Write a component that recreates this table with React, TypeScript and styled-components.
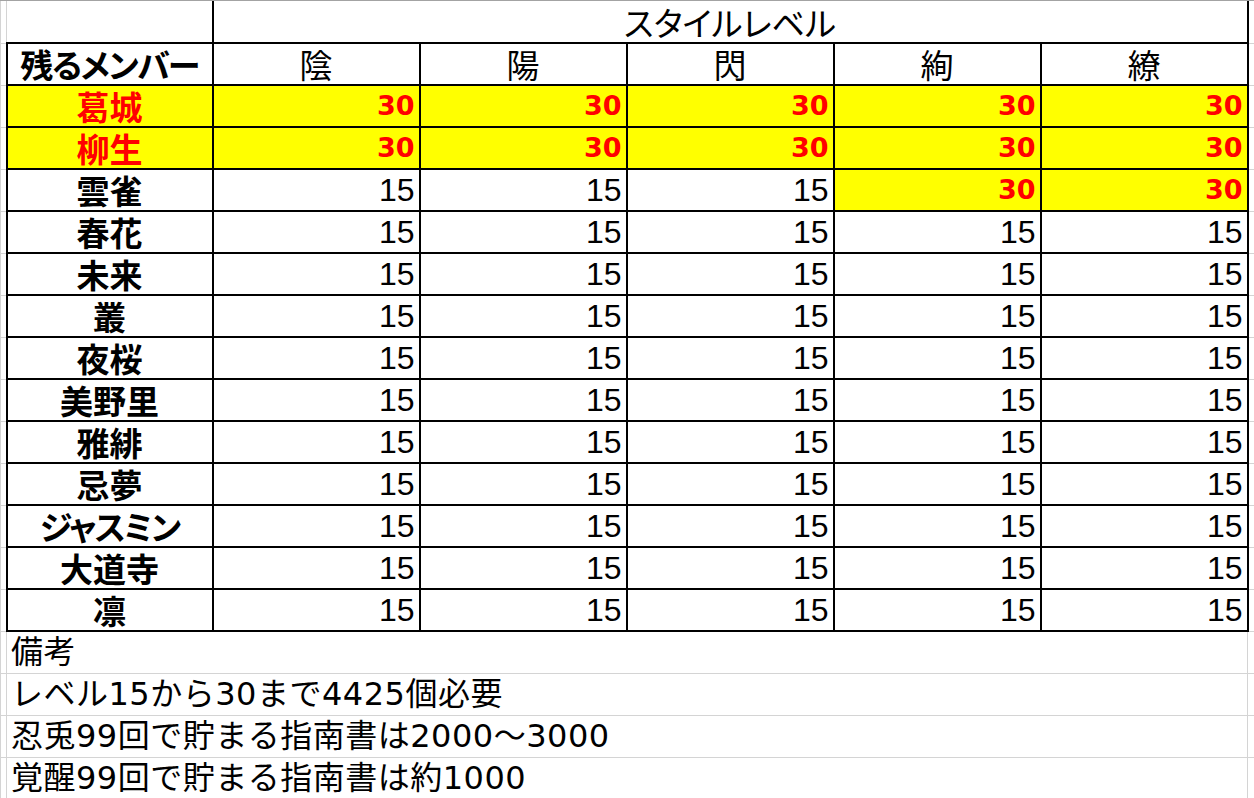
import React from "react";
import styled, { createGlobalStyle, css } from "styled-components";

const GlobalStyle = createGlobalStyle`
  html, body { margin: 0; padding: 0; background: #ffffff; }
  body { font-family: "Noto Sans CJK JP", sans-serif; }
`;

const Sheet = styled.div`
  width: 1254px;
  height: 798px;
  overflow: hidden;
  box-sizing: border-box;
  border-top: 1px solid #a3a3a3;
  background: #ffffff;
`;

const Grid = styled.table`
  border-collapse: collapse;
  table-layout: fixed;
  width: 1254px;
`;

const Row = styled.tr``;

const cellBase = css`
  height: 42px;
  padding: 0;
  box-sizing: border-box;
  border: 1px solid #d4d4d4;
  line-height: 38px;
  white-space: nowrap;
  overflow: hidden;
  color: #000000;
`;

const boxed = css`
  border: 2px solid #000000;
`;

const EdgeCell = styled.td<{ $first?: boolean }>`
  ${cellBase};
  ${(p) => p.$first && "border-top: none;"}
`;

const BlankCell = styled.td`
  ${cellBase};
  border-top: none;
`;

const TitleCell = styled.td`
  ${cellBase};
  ${boxed};
  border-top: none;
  text-align: center;
  font-family: "Noto Sans CJK JP", sans-serif;
  font-feature-settings: "palt";
  font-size: 33px;
  font-weight: 400;
`;

const HeadCell = styled.td<{ $bold?: boolean }>`
  ${cellBase};
  ${boxed};
  text-align: center;
  font-family: "Noto Sans CJK JP", sans-serif;
  font-feature-settings: "palt";
  font-size: 33px;
  font-weight: ${(p) => (p.$bold ? 700 : 400)};
  letter-spacing: ${(p) => (p.$bold ? "-1.5px" : "0")};
`;

const NameCell = styled.td<{ $hot?: boolean; $tight?: boolean }>`
  ${cellBase};
  ${boxed};
  text-align: center;
  font-family: "Noto Sans CJK JP", sans-serif;
  font-feature-settings: "palt";
  font-size: 33px;
  font-weight: 700;
  letter-spacing: ${(p) => (p.$tight ? "-2px" : "0")};
  background: ${(p) => (p.$hot ? "#ffff00" : "#ffffff")};
  color: ${(p) => (p.$hot ? "#ff0000" : "#000000")};
`;

const NumCell = styled.td<{ $hot?: boolean }>`
  ${cellBase};
  ${boxed};
  text-align: right;
  padding-right: 4px;
  background: ${(p) => (p.$hot ? "#ffff00" : "#ffffff")};
  ${(p) =>
    p.$hot
      ? css`
          color: #ff0000;
          font-family: "DejaVu Sans", sans-serif;
          font-weight: 700;
          font-size: 27px;
        `
      : css`
          color: #000000;
          font-family: "Liberation Sans", Arial, sans-serif;
          font-weight: 400;
          font-size: 32px;
        `}
`;

const NoteCell = styled.td`
  ${cellBase};
  text-align: left;
  padding-left: 4px;
  font-family: "DejaVu Sans", "Noto Sans CJK JP", sans-serif;
  font-size: 32px;
  font-weight: 400;
  letter-spacing: 0.5px;
`;

const styles = ["陰", "陽", "閃", "絢", "繚"];

type Member = { name: string; hotName?: boolean; values: number[] };

const members: Member[] = [
  { name: "葛城", hotName: true, values: [30, 30, 30, 30, 30] },
  { name: "柳生", hotName: true, values: [30, 30, 30, 30, 30] },
  { name: "雲雀", values: [15, 15, 15, 30, 30] },
  { name: "春花", values: [15, 15, 15, 15, 15] },
  { name: "未来", values: [15, 15, 15, 15, 15] },
  { name: "叢", values: [15, 15, 15, 15, 15] },
  { name: "夜桜", values: [15, 15, 15, 15, 15] },
  { name: "美野里", values: [15, 15, 15, 15, 15] },
  { name: "雅緋", values: [15, 15, 15, 15, 15] },
  { name: "忌夢", values: [15, 15, 15, 15, 15] },
  { name: "ジャスミン", values: [15, 15, 15, 15, 15] },
  { name: "大道寺", values: [15, 15, 15, 15, 15] },
  { name: "凛", values: [15, 15, 15, 15, 15] },
];

const notes = [
  "備考",
  "レベル15から30まで4425個必要",
  "忍兎99回で貯まる指南書は2000～3000",
  "覚醒99回で貯まる指南書は約1000",
];

const isKana = (s: string) => /^[\u30A0-\u30FF]+$/.test(s);

export default function App() {
  return (
    <>
      <GlobalStyle />
      <Sheet>
        <Grid>
          <colgroup>
            <col style={{ width: 6 }} />
            <col style={{ width: 206 }} />
            <col style={{ width: 207 }} />
            <col style={{ width: 207 }} />
            <col style={{ width: 207 }} />
            <col style={{ width: 207 }} />
            <col style={{ width: 207 }} />
            <col style={{ width: 7 }} />
          </colgroup>
          <tbody>
            <Row>
              <EdgeCell $first />
              <BlankCell />
              <TitleCell colSpan={5}>スタイルレベル</TitleCell>
              <EdgeCell $first />
            </Row>
            <Row>
              <EdgeCell />
              <HeadCell $bold>残るメンバー</HeadCell>
              {styles.map((s) => (
                <HeadCell key={s}>{s}</HeadCell>
              ))}
              <EdgeCell />
            </Row>
            {members.map((m) => (
              <Row key={m.name}>
                <EdgeCell />
                <NameCell $hot={m.hotName} $tight={isKana(m.name)}>
                  {m.name}
                </NameCell>
                {m.values.map((v, i) => (
                  <NumCell key={i} $hot={v === 30}>
                    {v}
                  </NumCell>
                ))}
                <EdgeCell />
              </Row>
            ))}
            {notes.map((n) => (
              <Row key={n}>
                <EdgeCell />
                <NoteCell colSpan={6}>{n}</NoteCell>
                <EdgeCell />
              </Row>
            ))}
          </tbody>
        </Grid>
      </Sheet>
    </>
  );
}
